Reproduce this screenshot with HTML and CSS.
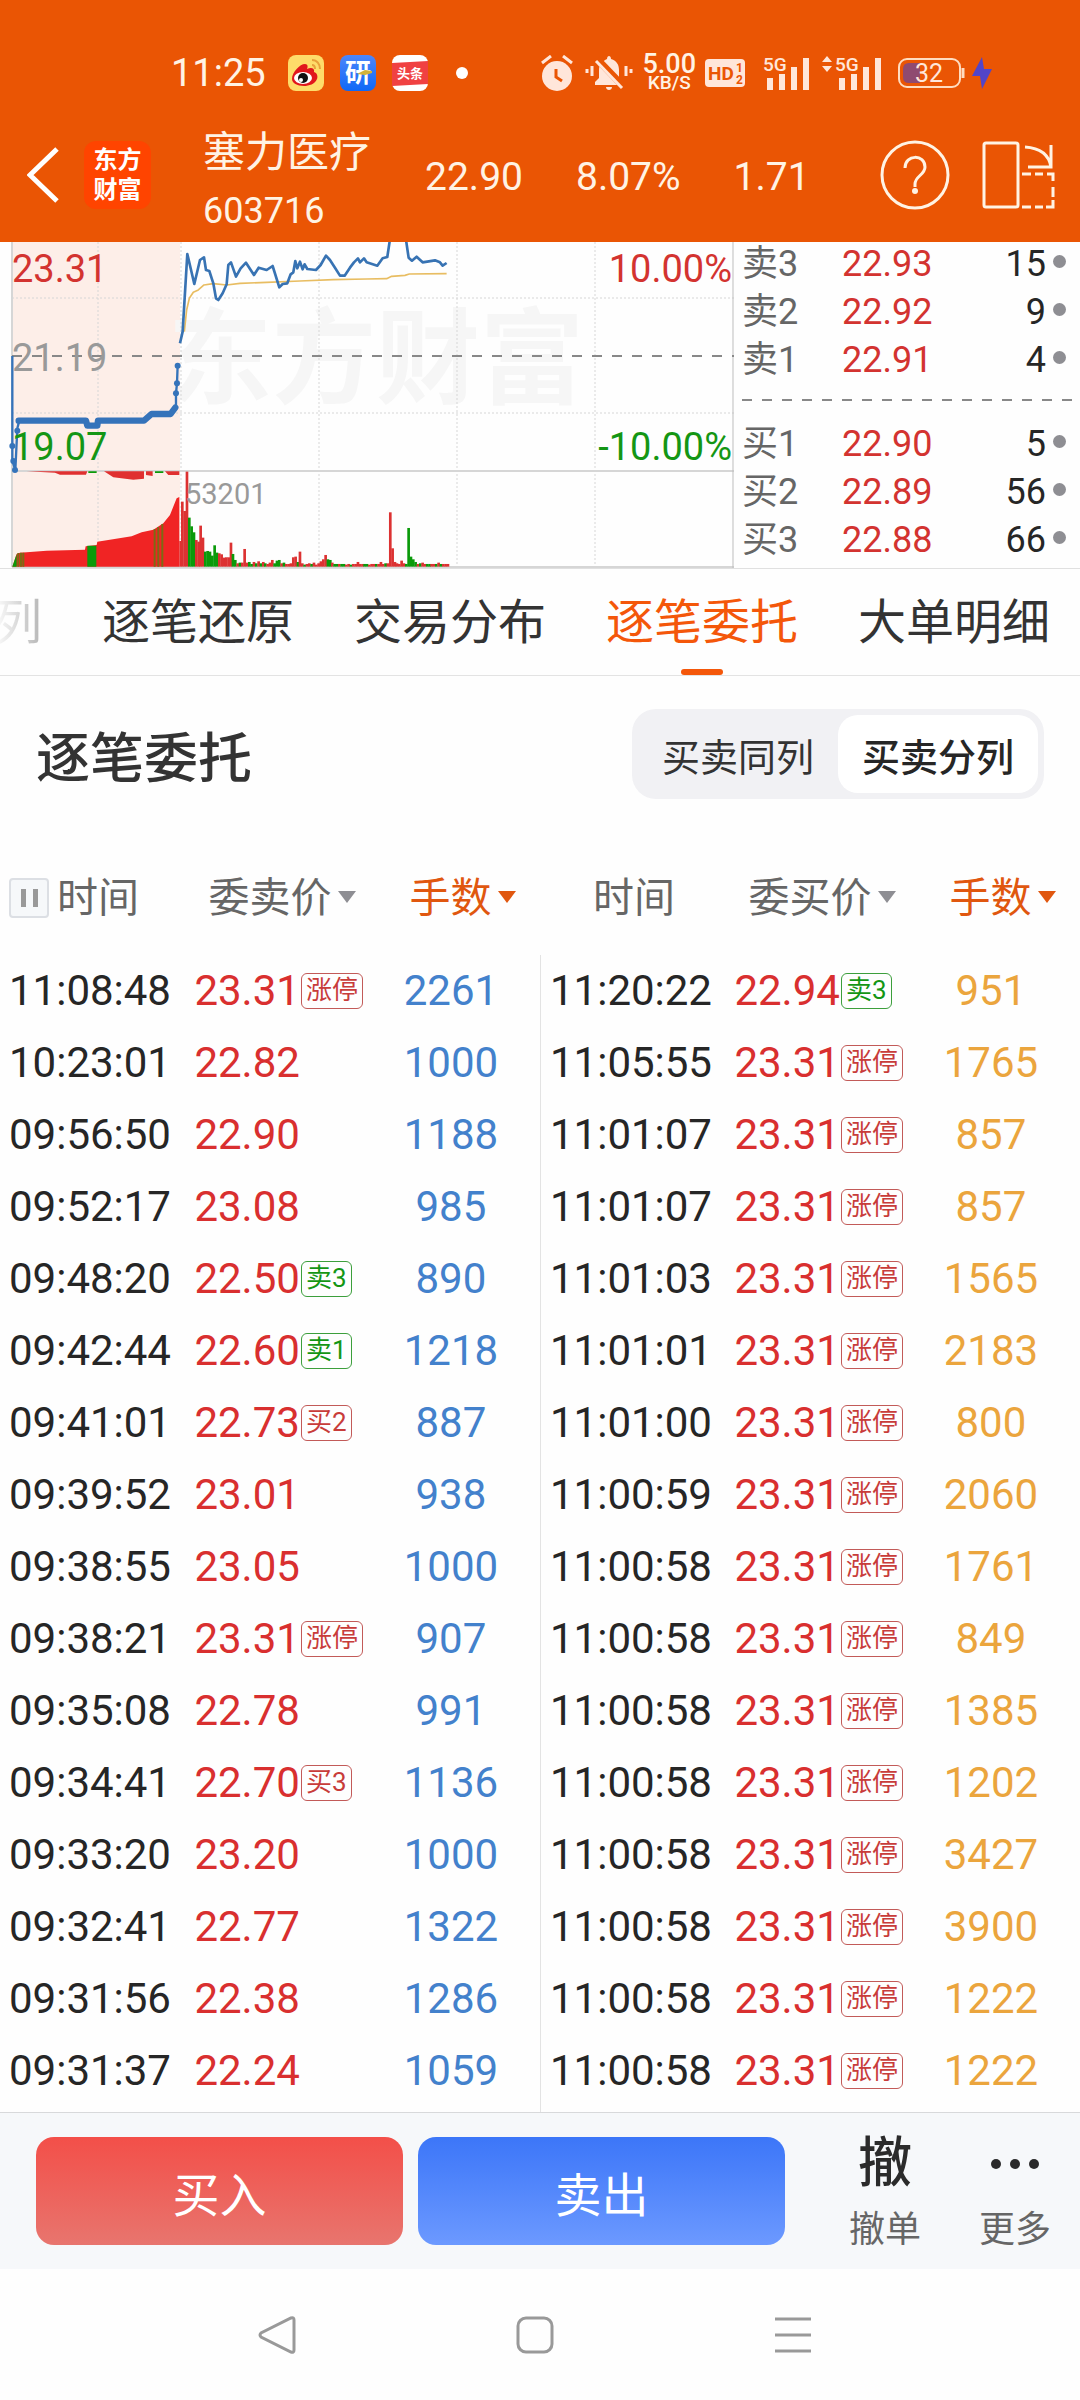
FILE: index.html
```html
<!DOCTYPE html>
<html lang="zh-CN">
<head>
    <meta charset="UTF-8">
    <meta name="viewport" content="width=device-width, initial-scale=1.0">
    <title>塞力医疗 603716</title>
    <link rel="stylesheet" href="styles.css">
</head>
<body>
    <header class="top">
        <div class="status">
            <span class="clock">11:25</span>
            <svg class="app" viewBox="0 0 36 36">
                <rect width="36" height="36" rx="8" fill="#fedc6a"/>
                <path d="M4 24C4 17 12 9 17 9c3 0 3 3 2 5 4-2 8-1 7 3 3 1 4 4 3 7-2 5-8 7-13 7C9 31 4 28 4 24z" fill="#e1161c"/>
                <ellipse cx="15" cy="23" rx="9" ry="6" fill="#fff"/>
                <circle cx="15" cy="23" r="5" fill="#111"/>
                <circle cx="13" cy="25" r="2" fill="#fff"/>
                <path d="M24 5c5 0 8 4 8 9M24 10c2 0 3 2 3 4" fill="none" stroke="#e9a13b" stroke-width="2"/>
            </svg>
            <svg class="app" viewBox="0 0 36 36">
                <defs>
                    <linearGradient id="yan" x1="0" y1="0" x2="0" y2="1">
                        <stop offset="0" stop-color="#4c86fb"/>
                        <stop offset="1" stop-color="#0f68f6"/>
                    </linearGradient>
                </defs>
                <rect width="36" height="36" rx="8" fill="url(#yan)"/>
                <text class="app-yan" x="5" y="27">研</text>
                <path d="M17 19l8-4 7 1v2l-7 2z" fill="#d2b23a"/>
            </svg>
            <svg class="app" viewBox="0 0 36 36">
                <rect width="36" height="36" rx="8" fill="#fff"/>
                <path d="M0 8l36-2v23L0 31z" fill="#f04142"/>
                <text class="app-tt" x="5" y="23">头条</text>
            </svg>
            <span class="more-dot"></span>

            <div class="status-right">
                <svg width="32" height="36" viewBox="0 0 32 36">
                    <circle cx="16" cy="21" r="15" fill="#ffe6da"/>
                    <path d="M1 8l9-7M31 8l-9-7" stroke="#ffe6da" stroke-width="3"/>
                    <path d="M15 14v8l6 4" fill="none" stroke="#ea5504" stroke-width="3"/>
                </svg>
                <svg width="48" height="36" viewBox="0 0 48 36">
                    <path d="M10 30v-3l4-4v-8c0-6 4-9 8-11 0-4 4-4 4 0 6 2 8 6 8 11v8l4 4v3z" fill="#ffe6da"/>
                    <path d="M21 32h6c0 4-6 4-6 0z" fill="#ffe6da"/>
                    <path d="M12 4l28 29" stroke="#ea5504" stroke-width="7"/>
                    <path d="M11 6l26 27" stroke="#ffe6da" stroke-width="3"/>
                    <path d="M2 14v4M7 11v10M41 11v10M46 14v4" stroke="#ffe6da" stroke-width="3"/>
                </svg>
                <div class="speed"><b>5.00</b><span>KB/S</span></div>
                <svg width="40" height="28" viewBox="0 0 40 28">
                    <rect width="40" height="28" rx="4" fill="#ffe6da"/>
                    <text class="hd" x="3" y="21">HD</text>
                    <text class="hd-small" x="31" y="13">1</text>
                    <text class="hd-small" x="31" y="25">2</text>
                </svg>
                <svg class="signal" width="47" height="46" viewBox="0 -6 47 46">
                    <text class="net" x="0" y="15">5G</text>
                    <path d="M7 22v12M19 18v16M31 11v23M43 2v32" stroke="#ffe6da" stroke-width="6"/>
                </svg>
                <svg width="60" height="46" viewBox="0 -6 60 46">
                    <path d="M0 6l5-6 5 6zM0 10l5 6 5-6z" fill="#ffe6da"/>
                    <text class="net" x="13" y="15">5G</text>
                    <path d="M20 22v12M32 18v16M44 11v23M56 2v32" stroke="#ffe6da" stroke-width="6"/>
                </svg>
                <svg class="battery" width="94" height="34" viewBox="0 0 94 34">
                    <rect x="1" y="3" width="61" height="28" rx="8" fill="none" stroke="#ffdcc0" stroke-width="2"/>
                    <path d="M22 7v20H11q-6 0-6-6v-8q0-6 6-6z" fill="#8f4a70"/>
                    <path d="M65 12v10" stroke="#ffdcc0" stroke-width="3"/>
                    <text class="level" x="17" y="26">32</text>
                    <path d="M84 1L74 20h8l2 13 10-20h-8z" fill="#5245c8"/>
                </svg>
            </div>
        </div>

        <div class="title-bar">
            <a class="back" href="#" aria-label="返回">
                <svg width="32" height="56" viewBox="0 0 32 56"><path d="M30 2L3 28l27 26" fill="none" stroke="#fff" stroke-width="5"/></svg>
            </a>
            <div class="logo">东方<br>财富</div>
            <div class="stock">
                <h1>塞力医疗</h1>
                <span>603716</span>
            </div>
            <span class="quote">22.90</span>
            <span class="quote">8.07%</span>
            <span class="quote">1.71</span>
            <button class="icon-btn help" aria-label="帮助">
                <svg width="70" height="70" viewBox="0 0 70 70">
                    <circle cx="35" cy="35" r="33" fill="none" stroke="#fff3e4" stroke-width="3"/>
                    <path d="M25 28c0-14 20-14 20-1 0 8-10 9-10 17v3" fill="none" stroke="#fff3e4" stroke-width="3"/>
                    <circle cx="35" cy="51" r="3" fill="#fff3e4"/>
                </svg>
            </button>
            <button class="icon-btn" aria-label="横屏">
                <svg width="74" height="68" viewBox="0 0 74 68" fill="none" stroke="#fff3e4" stroke-width="3">
                    <rect x="2" y="2" width="34" height="64" rx="2"/>
                    <path d="M43 6c16 1 24 8 26 20M69 4v22H46"/>
                    <path d="M40 33h9M53 33h8M65 33h6v7M71 46v10M71 59v7h-7M40 66h9M53 66h8"/>
                </svg>
            </button>
        </div>
    </header>

    <section class="market">
        <svg class="chart" viewBox="0 0 734 326">
            <rect x="12" y="0" width="168" height="326" fill="#fdeee8"/>
            <text class="watermark" x="168" y="154">东方财富</text>
            <g stroke="#d6d6d6" stroke-dasharray="2 2">
                <path d="M98 0v325M181 0v325M319 0v325M457 0v325M595 0v325M12 56h722M12 171h722"/>
            </g>
            <path d="M12 0v325" stroke="#d6d6d6" stroke-width="2"/>
            <path d="M12 229h722M12 325h722" stroke="#d6d6d6" stroke-width="2"/>
            <path d="M733 0v326" stroke="#bdbdbd"/>
            <path d="M12 114h722" stroke="#888" stroke-width="2" stroke-dasharray="10 10"/>
            <g transform="translate(0 -7) scale(.3333)" fill="none" stroke-linejoin="round">
                <path d="M553 290L560 225 568 190 580 172 595 165 612 150 640 146 680 150 720 145 800 142 900 138 1000 134 1100 132 1160 131 1175 124 1215 121 1228 117 1340 116" stroke="#e8bd62" stroke-width="5"/>
                <path d="M540 325L548 290 562 57 583 147 600 75 612 67 618 105 628 108 640 145 648 190 655 195 668 175 680 148 685 90 693 82 708 125 722 100 738 83 762 120 776 98 800 105 818 93 838 157 848 147 862 145 872 118 880 112 886 78 892 100 900 80 908 103 914 88 922 102 948 105 962 90 978 62 990 75 1005 98 1020 122 1034 122 1050 98 1062 82 1074 70 1080 82 1092 70 1100 82 1132 92 1148 70 1162 66 1172 0 1216 0 1226 68 1236 77 1250 65 1268 82 1305 76 1320 82 1328 92 1340 84" stroke="#3873b3" stroke-width="8"/>
                <path d="M37 363V678L46 705 52 580 58 557M528 515V475L531 445 533 392" stroke="#3573ba" stroke-width="7"/>
                <path d="M56 557H258L262 572H292L294 557H432L455 537H512L526 518" stroke="#3573ba" stroke-width="19" stroke-linecap="round"/>
                <g fill="#3573ba">
                    <circle cx="37" cy="633" r="9"/><circle cx="40" cy="678" r="9"/><circle cx="45" cy="705" r="9"/><circle cx="52" cy="587" r="9"/>
                    <circle cx="528" cy="475" r="9"/><circle cx="531" cy="445" r="9"/><circle cx="533" cy="392" r="9"/>
                </g>
                <g fill="#e03030">
                    <path d="M80 709L165 713 180 719H258L262 709zM312 709L340 727 400 734 432 731V709zM438 709V720L458 723V709zM495 709L505 720H538V709z"/>
                    <path d="M37 995L50 957 60 953 140 947 255 944 257 934 290 930 292 920 395 904 425 892 460 884 490 865 510 840 530 790 538 786V995z" fill="#f02424"/>
                    <path d="M538 918h6v77h-6z"/>
                </g>
                <path d="M37 995L50 957V995zM262 932H289V995H262zM265 709h25v5h-25zM465 709h25v5h-25z" fill="#0a9a0a"/>
                <path d="M55 954V995M63 953V995M70 953V995M464 882V995M475 876V995M487 867V995" stroke="#7d6a14" stroke-width="6"/>
                <g id="volume"></g>
            </g>
            <g class="axis">
                <text class="up" x="12" y="40">23.31</text>
                <text class="flat" x="12" y="129">21.19</text>
                <text class="down" x="12" y="218">19.07</text>
                <text class="up" x="732" y="40" text-anchor="end">10.00%</text>
                <text class="down" x="732" y="218" text-anchor="end">-10.00%</text>
                <text class="vol" x="185" y="262">53201</text>
            </g>
        </svg>
        <div class="book">
            <ul>
                <li><span>卖3</span><span class="up">22.93</span><span class="num">15</span></li>
                <li><span>卖2</span><span class="up">22.92</span><span class="num">9</span></li>
                <li><span>卖1</span><span class="up">22.91</span><span class="num">4</span></li>
            </ul>
            <div class="book-line"></div>
            <ul>
                <li><span>买1</span><span class="up">22.90</span><span class="num">5</span></li>
                <li><span>买2</span><span class="up">22.89</span><span class="num">56</span></li>
                <li><span>买3</span><span class="up">22.88</span><span class="num">66</span></li>
            </ul>
        </div>
    </section>

    <nav class="tabs">
        <a class="faded" href="#">列</a>
        <a href="#">逐笔还原</a>
        <a href="#">交易分布</a>
        <a class="active" href="#">逐笔委托</a>
        <a href="#">大单明细</a>
    </nav>

    <main>
        <div class="section-head">
            <h2>逐笔委托</h2>
            <div class="switch">
                <button>买卖同列</button>
                <button class="on">买卖分列</button>
            </div>
        </div>

        <div class="orders">
            <table class="sell">
                <thead>
                    <tr>
                        <th class="time"><button class="pause" aria-label="暂停"></button>时间</th>
                        <th class="price">委卖价<i class="arrow"></i></th>
                        <th class="qty">手数<i class="arrow"></i></th>
                    </tr>
                </thead>
                <tbody id="sellList"></tbody>
            </table>
            <table class="buy">
                <thead>
                    <tr>
                        <th class="time">时间</th>
                        <th class="price">委买价<i class="arrow"></i></th>
                        <th class="qty">手数<i class="arrow"></i></th>
                    </tr>
                </thead>
                <tbody id="buyList"></tbody>
            </table>
        </div>
    </main>

    <footer>
        <div class="trade-bar">
            <button class="trade buy-btn">买入</button>
            <button class="trade sell-btn">卖出</button>
            <div class="tools">
                <a href="#"><b>撤</b>撤单</a>
                <a href="#">
                    <svg width="54" height="54" viewBox="0 0 54 54" fill="#2b2b2b"><circle cx="8" cy="27" r="5"/><circle cx="27" cy="27" r="5"/><circle cx="46" cy="27" r="5"/></svg>
                    更多
                </a>
            </div>
        </div>
        <div class="sys-nav">
            <button class="icon-btn" aria-label="后退"><svg width="38" height="38" viewBox="0 0 38 38"><path d="M33 2q3-1 3 2v30q0 3-3 2L3 21q-2-2 0-4z"/></svg></button>
            <button class="icon-btn" aria-label="主页"><svg width="38" height="38" viewBox="0 0 38 38"><rect x="2" y="2" width="34" height="34" rx="8"/></svg></button>
            <button class="icon-btn" aria-label="菜单"><svg width="38" height="38" viewBox="0 0 38 38"><path d="M1 3h36M1 19h36M1 35h36"/></svg></button>
        </div>
    </footer>
    <script src="script.js"></script>
</body>
</html>
```

FILE: styles.css
```css
* {
    margin: 0;
    padding: 0;
    box-sizing: border-box;
}

body {
    font-family: Roboto, "Noto Sans CJK SC", sans-serif;
    background-color: #fefefe;
    color: #262626;
}

a {
    color: inherit;
    text-decoration: none;
}

button {
    font-family: inherit;
    border: none;
    background: none;
    cursor: pointer;
}

svg {
    display: block;
    flex: none;
}

ul {
    list-style: none;
}

.up { color: #d33330; fill: #d33330; }
.down { fill: #149614; }
.flat, .vol { fill: #999; }

/* 顶部 */
.top {
    background-color: #ea5504;
    color: #fff3e4;
}

.status {
    display: flex;
    align-items: center;
    gap: 16px;
    height: 107px;
    padding: 38px 88px 0 171px;
}

.clock {
    font-size: 38px;
    margin-right: 6px;
}

.app {
    width: 36px;
    height: 36px;
}

.app-yan { font-size: 26px; font-weight: 700; fill: #fff; }
.app-tt { font-size: 13px; font-weight: 700; fill: #fff; }

.more-dot {
    width: 12px;
    height: 12px;
    margin-left: 12px;
    border-radius: 50%;
    background-color: #fff;
}

.status-right {
    display: flex;
    align-items: center;
    gap: 12px;
    margin-left: auto;
}

.speed {
    display: flex;
    flex-direction: column;
    align-items: center;
    font-size: 19px;
    line-height: 16px;
    font-weight: 500;
    margin: 0 -3px;
}

.speed b {
    font-size: 27px;
    line-height: 21px;
    font-weight: 500;
}

.hd { font-size: 19px; font-weight: 700; fill: #ea5504; }
.hd-small { font-size: 12px; font-weight: 700; fill: #ea5504; }
.net { font-size: 19px; font-weight: 500; fill: #ffe6da; }
.level { font-size: 25px; fill: #ffe6da; }
.signal { margin-left: 6px; }
.battery { margin-left: 4px; }

.title-bar {
    display: flex;
    align-items: center;
    height: 135px;
    padding: 0 24px 0 27px;
}

.logo {
    width: 67px;
    height: 68px;
    margin: 0 52px 0 25px;
    padding-top: 4px;
    border-radius: 12px;
    background-color: #ff4400;
    color: #fff;
    font-size: 24px;
    line-height: 30px;
    font-weight: 700;
    text-align: center;
}

.stock {
    padding-top: 15px;
    margin-right: 54px;
    font-size: 36px;
    line-height: 58px;
}

.stock h1 {
    font-size: 42px;
    font-weight: 400;
}

.stock span {
    display: block;
}

.quote {
    padding-top: 4px;
    font-size: 39px;
    margin-right: 53px;
}

.help {
    margin: 0 32px 0 auto;
}

/* 分时图与盘口 */
.market {
    display: grid;
    grid-template-columns: 734fr 346fr;
    border-bottom: 1px solid #e0e0e0;
}

.chart {
    width: 100%;
}

.axis { font-size: 38px; }
.vol { font-size: 29px; }
.watermark { font-size: 104px; font-weight: 700; fill: #f6f6f6; }

.book {
    padding: 0 8px;
    font-size: 36px;
    line-height: 44px;
}

.book ul {
    display: grid;
    gap: 4px;
}

.book li {
    display: grid;
    grid-template-columns: 100px 1fr 1fr;
    color: #666;
}

.book .num {
    display: flex;
    justify-content: flex-end;
    color: #262626;
}

.book .num::after {
    content: "";
    width: 13px;
    height: 13px;
    margin: 13px 6px 0 7px;
    border-radius: 50%;
    background-color: #8e8e93;
}

.book-line {
    height: 2px;
    margin: 17px 0 21px;
    background: repeating-linear-gradient(to right, #888 0 10px, transparent 10px 20px);
}

/* 标签栏 */
.tabs {
    display: flex;
    justify-content: flex-end;
    gap: 60px;
    padding: 2px 30px 0 0;
    overflow: hidden;
    border-bottom: 1px solid #e3e3e3;
    font-size: 48px;
    line-height: 104px;
    color: #333;
}

.tabs a {
    flex: none;
    position: relative;
}

.tabs .active {
    color: #f4570a;
}

.tabs .active::after {
    content: "";
    position: absolute;
    left: 50%;
    bottom: 0;
    width: 42px;
    height: 6px;
    margin-left: -21px;
    border-radius: 3px;
    background-color: #f4570a;
}

.tabs .faded {
    background: linear-gradient(to right, #fefefe, #b5b5b5);
    background-clip: text;
    color: transparent;
}

.section-head {
    display: flex;
    justify-content: space-between;
    align-items: center;
    padding: 33px 36px 38px;
}

.section-head h2 {
    font-size: 54px;
    font-weight: 500;
    color: #333;
}

.switch {
    display: flex;
    padding: 6px;
    border-radius: 24px;
    background-color: #f1f1f4;
}

.switch button {
    height: 78px;
    padding: 0 24px;
    border-radius: 20px;
    font-size: 38px;
    color: #333;
}

.switch .on {
    background-color: #fff;
    font-weight: 500;
    color: #262626;
}

/* 委托列表 */
.orders {
    display: flex;
}

.orders table {
    flex: 1;
    width: 50%;
    table-layout: fixed;
    border-spacing: 0;
    font-size: 42px;
    line-height: 72px;
}

.orders th {
    height: 118px;
    padding-top: 4px;
    font-size: 41px;
    font-weight: 400;
    text-align: left;
    color: #666;
    white-space: nowrap;
}

.orders td {
    white-space: nowrap;
}

.orders tr:last-child td {
    padding-bottom: 5px;
}

.orders .time {
    width: 36%;
    padding-left: 9px;
}

.orders .price {
    width: 31%;
    color: #d92f2f;
}

.orders .qty {
    width: 33%;
    text-align: center;
}

.orders th.price {
    padding-left: 14px;
    color: #666;
}

.orders th.qty {
    padding-left: 24px;
    color: #e0570f;
}

.buy td.time {
    border-left: 1px solid #e3e3e3;
}

.orders.orders .buy th.time {
    padding-left: 53px;
}

.sell td.qty { color: #4381cc; }
.buy td.qty { color: #eba53d; }

.price-cell {
    display: flex;
    align-items: center;
}

.tag {
    height: 36px;
    margin-left: 1px;
    padding: 0 4px;
    border: 1px solid #c25a58;
    border-radius: 6px;
    font-size: 26px;
    line-height: 33px;
    color: #c83c3a;
}

.tag.green {
    border-color: #3c9f3c;
    color: #149614;
}

.pause {
    width: 40px;
    height: 40px;
    margin-right: 8px;
    border: 2px solid #dcdfe4;
    border-radius: 4px;
    vertical-align: -4px;
    background: linear-gradient(to right, #999 5px, transparent 5px 12px, #999 12px) center / 17px 18px no-repeat #f6f8fa;
}

.arrow {
    display: inline-block;
    margin-left: 7px;
    border: 9px solid transparent;
    border-top: 12px solid #8e8e93;
    border-bottom: none;
    vertical-align: 9px;
}

.qty .arrow {
    border-top-color: #e0570f;
}

/* 底部 */
.trade-bar {
    display: flex;
    gap: 15px;
    padding: 24px 0 24px 36px;
    border-top: 1px solid #d8d9db;
    background-color: #f6f8fa;
}

.trade {
    flex: 1;
    height: 108px;
    border-radius: 18px;
    font-size: 47px;
    color: #fff;
}

.buy-btn { background: linear-gradient(#f34f49, #e8756e); }
.sell-btn { background: linear-gradient(#3c76f8, #6c99ff); }

.tools {
    display: flex;
    margin-left: 20px;
}

.tools a {
    display: flex;
    flex-direction: column;
    align-items: center;
    gap: 24px;
    width: 130px;
    font-size: 36px;
    line-height: 30px;
    color: #666;
}

.tools b {
    font-size: 54px;
    line-height: 54px;
    font-weight: 500;
    color: #2b2b2b;
}

.sys-nav {
    display: flex;
    justify-content: center;
    align-items: center;
    gap: 220px;
    height: 132px;
    padding-right: 10px;
}

.sys-nav svg {
    fill: none;
    stroke: #999;
    stroke-width: 3px;
}
```

FILE: script.js
```js
const sells = [
    ["11:08:48", "23.31", "涨停", 2261],
    ["10:23:01", "22.82", "", 1000],
    ["09:56:50", "22.90", "", 1188],
    ["09:52:17", "23.08", "", 985],
    ["09:48:20", "22.50", "卖3", 890],
    ["09:42:44", "22.60", "卖1", 1218],
    ["09:41:01", "22.73", "买2", 887],
    ["09:39:52", "23.01", "", 938],
    ["09:38:55", "23.05", "", 1000],
    ["09:38:21", "23.31", "涨停", 907],
    ["09:35:08", "22.78", "", 991],
    ["09:34:41", "22.70", "买3", 1136],
    ["09:33:20", "23.20", "", 1000],
    ["09:32:41", "22.77", "", 1322],
    ["09:31:56", "22.38", "", 1286],
    ["09:31:37", "22.24", "", 1059]
];

const buys = [
    ["11:20:22", "22.94", "卖3", 951],
    ["11:05:55", "23.31", "涨停", 1765],
    ["11:01:07", "23.31", "涨停", 857],
    ["11:01:07", "23.31", "涨停", 857],
    ["11:01:03", "23.31", "涨停", 1565],
    ["11:01:01", "23.31", "涨停", 2183],
    ["11:01:00", "23.31", "涨停", 800],
    ["11:00:59", "23.31", "涨停", 2060],
    ["11:00:58", "23.31", "涨停", 1761],
    ["11:00:58", "23.31", "涨停", 849],
    ["11:00:58", "23.31", "涨停", 1385],
    ["11:00:58", "23.31", "涨停", 1202],
    ["11:00:58", "23.31", "涨停", 3427],
    ["11:00:58", "23.31", "涨停", 3900],
    ["11:00:58", "23.31", "涨停", 1222],
    ["11:00:58", "23.31", "涨停", 1222]
];

function renderOrders(id, list) {
    document.getElementById(id).innerHTML = list.map(([time, price, tag, qty]) => {
        const color = tag.startsWith("卖") ? "tag green" : "tag";
        const label = tag ? `<span class="${color}">${tag}</span>` : "";
        return `<tr><td class="time">${time}</td><td class="price"><div class="price-cell">${price}${label}</div></td><td class="qty">${qty}</td></tr>`;
    }).join("");
}

// 每分钟成交量，负数为绿柱
const volumes = [
    195, 167, 285, -147, -121, -103, 80, 75, 123, 87, -45, -47, -45, -33, -64, -42, 40, 37, 27, 28,
    28, 72, -38, -20, 10, -12, 12, 53, 12, -14, -8, 14, -10, 16, -10, 14, -10, 8, 12, 20,
    -10, -18, -20, 10, -12, 8, 8, 10, 28, 30, -14, 45, 10, -6, 8, 10, -8, 12, 6, 10,
    16, 22, 35, -22, -20, 12, -8, -8, 8, -8, -8, 6, 8, -6, 8, 8, 14, 8, 8, -8,
    -8, 6, 8, 8, -8, 8, 14, 8, -10, 10, 163, 55, 14, 10, 8, 18, 10, -8, -116, -30,
    -22, -14, 8, -10, 12, 8, -8, -8, 8, 8, -8, 12, -8, 8, 8, 8
];

function renderVolume() {
    document.getElementById("volume").innerHTML = volumes.map((v, i) => {
        const h = Math.abs(v);
        const x = Math.round(543 + i * 6.93);
        return `<rect x="${x}" y="${995 - h}" width="8" height="${h}" fill="${v < 0 ? "#0a9a0a" : "#dc3232"}"/>`;
    }).join("");
}

renderOrders("sellList", sells);
renderOrders("buyList", buys);
renderVolume();
```
